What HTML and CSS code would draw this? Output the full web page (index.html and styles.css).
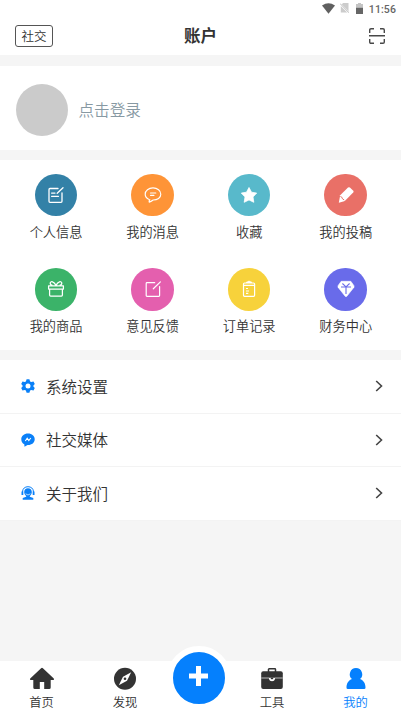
FILE: index.html
```html
<!DOCTYPE html>
<html lang="zh-CN">
<head>
<meta charset="utf-8">
<title>账户</title>
<link rel="stylesheet" href="styles.css">
</head>
<body>
<div class="app">
  <header class="header">
    <div class="status">
      <svg class="wifi" width="13" height="11" viewBox="0 0 13 11"><path d="M0 2.6Q6.5-2 13 2.6L6.5 10.8Z" fill="#606060"/></svg>
      <svg class="sim" width="9" height="10" viewBox="0 0 9 10"><path d="M3 0H8.5V9.5H.8V2.5Z" fill="#ccc"/><path d="M0 1L9 10" stroke="#fff" stroke-width="1.8"/><path d="M0 .5L9 9.8" stroke="#aaa" stroke-width=".8"/></svg>
      <svg class="battery" width="7" height="11" viewBox="0 0 7 11"><path d="M2 0H5V1H7V5H0V1H2Z" fill="#c4c4c4"/><path d="M0 4.8H7V11H0Z" fill="#666"/></svg>
      <span class="time">11:56</span>
    </div>
    <div class="titlebar">
      <div class="side"><span class="tag">社交</span></div>
      <h1 class="title">账户</h1>
      <div class="side end">
        <svg width="16" height="16" viewBox="0 0 16 16" fill="none" stroke="#484848" stroke-width="1.4"><path d="M.7 5V2Q.7.7 2 .7H5M11 .7H14Q15.3.7 15.3 2V5M15.3 11V14Q15.3 15.3 14 15.3H11M5 15.3H2Q.7 15.3.7 14V11M0 7.8H16"/></svg>
      </div>
    </div>
  </header>

  <section class="profile">
    <div class="avatar"></div>
    <span class="login">点击登录</span>
  </section>

  <section class="grid">
    <div class="cell"><div class="dot info"><svg width="18" height="18" viewBox="0 0 18 18" fill="none" stroke="#fff" stroke-width="1.3" stroke-linecap="round" stroke-linejoin="round"><path d="M11 2.5H3Q2 2.5 2 3.5V15.3Q2 16.3 3 16.3H14Q15 16.3 15 15.3V6.8M10.2 7.2L16 1.7M4.6 7.1H8M4.6 10.3H11.5"/></svg></div><span>个人信息</span></div>
    <div class="cell"><div class="dot message"><svg width="18" height="18" viewBox="0 0 18 18" fill="none" stroke="#fff" stroke-width="1.15" stroke-linecap="round" stroke-linejoin="round"><path d="M4.6 13.2C2.5 12.2 1.2 10.4 1.2 8.3C1.2 4.6 4.6 1.9 9 1.9S16.8 4.6 16.8 8.2S13.4 14 9.2 14C8 14.9 6.8 15.8 5.2 16.1Q4.8 15 5.8 13.6M6.5 7H11.8M6.5 9.3H10"/></svg></div><span>我的消息</span></div>
    <div class="cell"><div class="dot favorite"><svg width="18" height="18" viewBox="0 0 18 18"><path d="M9 1.5L11.5 6.2L16.7 7.1L13 10.9L13.8 16.3L9 13.9L4.2 16.3L5 10.9L1.3 7.1L6.5 6.2Z" fill="#fff" stroke="#fff" stroke-width=".8" stroke-linejoin="round"/></svg></div><span>收藏</span></div>
    <div class="cell"><div class="dot submit"><svg width="18" height="18" viewBox="0 0 18 18"><path d="M3.2 9.2L11 1.6Q12 .8 12.9 1.6L16.3 4.8Q17 5.7 16.2 6.6L8.5 14.2L7.2 15.3L1.8 16.8Z" fill="#fff"/><path d="M3.4 10.5L4.8 11.2L5.5 12.8L7.2 14" fill="none" stroke="#e97067" stroke-width="1"/></svg></div><span>我的投稿</span></div>
    <div class="cell"><div class="dot goods"><svg width="18" height="18" viewBox="0 0 18 18" fill="none" stroke="#fff" stroke-width="1.25" stroke-linejoin="round"><path d="M1.6 5.8H16.4V9H1.6ZM2.6 9V15Q2.6 16 3.6 16H14.4Q15.4 16 15.4 15V9M9 5.8C7.5 1.2 3.2.8 3.2 3.2Q3.2 5 5.5 5.3M9 5.8C10.5 1.2 14.8.8 14.8 3.2Q14.8 5 12.5 5.3"/></svg></div><span>我的商品</span></div>
    <div class="cell"><div class="dot feedback"><svg width="18" height="18" viewBox="0 0 18 18" fill="none" stroke="#fff" stroke-width="1.2" stroke-linecap="round" stroke-linejoin="round"><path d="M10.7 2.7H3Q2.2 2.7 2.2 3.5V15.5Q2.2 16.3 3 16.3H14.8Q15.6 16.3 15.6 15.5V6.6M9.3 8.8L16.4 1.9"/></svg></div><span>意见反馈</span></div>
    <div class="cell"><div class="dot orders"><svg width="18" height="18" viewBox="0 0 18 18" fill="none" stroke="#fff" stroke-width="1.2" stroke-linejoin="round"><path d="M4.5 3H13.5Q14.6 3 14.6 4V15.3Q14.6 16.3 13.6 16.3H4.6Q3.5 16.3 3.5 15.3V4Q3.5 3 4.5 3ZM3.8 5.4H14.3M6.5 3Q6.5 1.9 8 1.9H10.2Q11.6 1.9 11.6 3M9 .8V2M6 8.5H8M6 11H9M6 13.4H8.3"/></svg></div><span>订单记录</span></div>
    <div class="cell"><div class="dot finance"><svg width="18" height="18" viewBox="0 0 18 18"><path d="M4.2 1.3H13.8L17 5.8V7.2L9.8 16.3Q9 17 8.2 16.3L1 7.2V5.8Z" fill="#fff" stroke="#fff" stroke-width=".6" stroke-linejoin="round"/><path d="M5.4 3.5L9 6.8L12.6 3.5M4 7H14M9 7V14" fill="none" stroke="#696bea" stroke-width="1.1"/></svg></div><span>财务中心</span></div>
  </section>

  <section class="list">
    <div class="row"><svg class="lead" width="14" height="14" viewBox="0 0 14 14"><path d="M5.6.3H8.4L9.1 2.4L10.3 3.1L12.5 2.6L13.8 5L12.4 6.5V7.5L13.8 9L12.5 11.4L10.3 10.9L9.1 11.6L8.4 13.7H5.6L4.9 11.6L3.7 10.9L1.5 11.4L.2 9L1.6 7.5V6.5L.2 5L1.5 2.6L3.7 3.1L4.9 2.4Z" fill="#0a80f8"/><circle cx="7" cy="7" r="2.5" fill="#fff"/></svg><span>系统设置</span><svg class="arrow" width="8" height="12" viewBox="0 0 8 12"><path d="M1.2 1L6.5 6L1.2 11"/></svg></div>
    <div class="row"><svg class="lead" width="14" height="14" viewBox="0 0 14 14"><path d="M7 .5C3 .5.3 3 .3 6.2C.3 8.5 1.4 10.4 3.3 11.2L3.5 13.7L6.5 12C10.7 12.2 13.7 9.7 13.7 6.2C13.7 3 11 .5 7 .5Z" fill="#0a80f8"/><path d="M4.3 8L6.2 5.3L7.8 7.5L9.8 5" fill="none" stroke="#fff" stroke-width="1.1"/></svg><span>社交媒体</span><svg class="arrow" width="8" height="12" viewBox="0 0 8 12"><path d="M1.2 1L6.5 6L1.2 11"/></svg></div>
    <div class="row"><svg class="lead" width="14" height="14" viewBox="0 0 14 14"><path d="M1.5 8V6C1.5 2.5 4 .7 7 .7S12.5 2.5 12.5 6V8" fill="none" stroke="#0a80f8" stroke-width="1"/><path d="M.5 5.5H2.3V9H.5ZM11.7 5.5H13.5V9H11.7ZM7 2.2C9.4 2.2 10.8 3.7 10.8 6C10.8 7.8 10 9.2 8.8 10V10.8L12.3 12V13.7H1.7V12L5.2 10.8V10C4 9.2 3.2 7.8 3.2 6C3.2 3.7 4.6 2.2 7 2.2Z" fill="#0a80f8"/><path d="M4.6 7.8Q7 10.2 9.4 7.8" fill="none" stroke="#fff" stroke-width=".7"/></svg><span>关于我们</span><svg class="arrow" width="8" height="12" viewBox="0 0 8 12"><path d="M1.2 1L6.5 6L1.2 11"/></svg></div>
  </section>

  <nav class="nav">
    <div class="tab"><svg width="26" height="24" viewBox="0 0 26 24"><path d="M12.1 1.2Q13 .5 13.9 1.2L24.8 11.4Q25.7 13 24 13H21.7V20.5Q21.7 22 20.2 22H15.2V15H10.8V22H5.8Q4.3 22 4.3 20.5V13H2Q.3 13 1.2 11.4Z" fill="#333"/></svg><span>首页</span></div>
    <div class="tab"><svg width="24" height="24" viewBox="0 0 24 24"><circle cx="12" cy="11.7" r="11" fill="#333"/><path d="M18.2 5.2L14 13.7L5.8 18.2L10 9.7Z" fill="#fff"/><circle cx="12" cy="11.7" r="1.3" fill="#333"/></svg><span>发现</span></div>
    <div class="tab"><div class="plus"><svg width="19" height="20" viewBox="0 0 19 20"><path d="M7 0H12V7.5H19V12.5H12V20H7V12.5H0V7.5H7Z" fill="#fff"/></svg></div></div>
    <div class="tab"><svg width="24" height="24" viewBox="0 0 24 24"><path d="M8.5 5V2.5Q8.5 1.8 9.2 1.8H14.8Q15.5 1.8 15.5 2.5V5" fill="none" stroke="#333" stroke-width="1.5"/><rect x="1.2" y="4.2" width="21.6" height="17.8" rx="2" fill="#333"/><path d="M1.2 11H9M15 11H22.8" stroke="#bbb" stroke-width="1"/><path d="M9 10.7H15V12Q14.5 14.3 12 14.3T9 12Z" fill="#fff"/><path d="M10.8 10.7H13.2V12.2H10.8Z" fill="#333"/></svg><span>工具</span></div>
    <div class="tab active"><svg width="24" height="24" viewBox="0 0 24 24"><path d="M12 1A6.3 6.3 0 0 1 16 12.1C19.5 13.3 21.5 16.5 21.5 20.7Q21.5 22 20.2 22H3.8Q2.5 22 2.5 20.7C2.5 16.5 4.5 13.3 8 12.1A6.3 6.3 0 0 1 12 1Z" fill="#0580fd"/></svg><span>我的</span></div>
  </nav>
</div>
</body>
</html>
```

FILE: styles.css
```css
* { box-sizing: border-box; }
body {
  margin: 0;
  background: #f5f5f5;
  color: #333;
  font-family: "Noto Sans CJK SC", sans-serif;
  font-weight: 350;
}
svg { display: block; flex: none; }
.app {
  display: flex;
  flex-direction: column;
  width: 401px;
  height: 714px;
  overflow: hidden;
}
.header { height: 55px; background: #fff; flex: none; }
.status {
  display: flex;
  align-items: center;
  justify-content: flex-end;
  height: 16px;
  padding: 0 5px 0 0;
}
.sim { margin-left: 5px; }
.battery { margin-left: 7px; }
.time {
  margin-left: 6px;
  font: 500 10.5px/17px Roboto, sans-serif;
  letter-spacing: 0.1px;
  color: #666;
  padding-top: 2px;
}
.titlebar {
  display: flex;
  align-items: center;
  height: 40px;
  padding: 0 16px 0 15px;
}
.side { flex: 1; display: flex; }
.end { justify-content: flex-end; }
.tag {
  width: 38px;
  height: 22px;
  border: 1px solid #555;
  border-radius: 3px;
  font-size: 12.5px;
  line-height: 20px;
  text-align: center;
}
.title {
  margin: 0;
  padding: 0 0 2px 1px;
  font-size: 16.5px;
  line-height: 24px;
  font-weight: 700;
}
.profile {
  display: flex;
  align-items: center;
  gap: 11px;
  height: 84.5px;
  margin-top: 10.5px;
  padding: 4px 15.5px 0;
  background: #fff;
  flex: none;
}
.avatar { width: 52px; height: 52px; border-radius: 50%; background: #cbcbcb; }
.login { padding-bottom: 2px; font-size: 15.6px; line-height: 24px; color: #8799a3; }
.grid {
  display: grid;
  grid-template-columns: repeat(4, 1fr);
  grid-template-rows: 94.5px 94.5px;
  height: 189.5px;
  margin-top: 10px;
  padding: 0 7px 0 7.8px;
  background: #fff;
  flex: none;
}
.cell {
  display: flex;
  flex-direction: column;
  align-items: center;
  padding-top: 13.5px;
  font-size: 13.2px;
  line-height: 20px;
}
.cell span { margin-top: 5.5px; }
.dot {
  display: flex;
  align-items: center;
  justify-content: center;
  width: 42.5px;
  height: 42.5px;
  border-radius: 50%;
}
.info { background: #3381a7; }
.message { background: #fe9437; }
.favorite { background: #58b9cb; }
.submit { background: #e97067; }
.goods { background: #3bb369; }
.feedback { background: #e45fae; }
.orders { background: #f7d23b; }
.finance { background: #696bea; }
.list { margin-top: 10.5px; background: #fff; flex: none; }
.row {
  display: flex;
  align-items: center;
  height: 53.5px;
  padding: 0 18px 0 21px;
  border-bottom: 1px solid #f3f3f3;
  font-size: 15.5px;
  line-height: 24px;
}
.row span { flex: 1; margin-left: 11px; padding-bottom: 1px; }
.arrow path { fill: none; stroke: #444; stroke-width: 1.6; }
.nav {
  display: grid;
  grid-template-columns: 83px 84px 63px 84px 83px;
  height: 53px;
  margin-top: auto;
  background: #fff;
  flex: none;
}
.tab {
  display: flex;
  flex-direction: column;
  align-items: center;
  padding-top: 6px;
  font-size: 12.3px;
  line-height: 18px;
}
.tab span { margin-top: 1.5px; }
.active { color: #0580fd; }
.plus {
  display: flex;
  align-items: center;
  justify-content: center;
  flex: none;
  width: 64px;
  height: 64px;
  margin-top: -21.5px;
  padding-bottom: 3px;
  border: 6px solid #fff;
  border-radius: 50%;
  background: #0580fd;
}
```
